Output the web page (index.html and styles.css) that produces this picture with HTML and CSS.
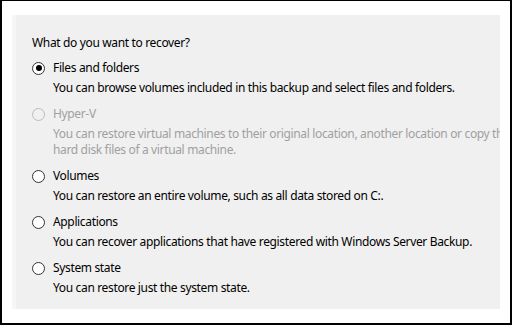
FILE: index.html
```html
<!DOCTYPE html>
<html lang="en">
<head>
  <meta charset="UTF-8" />
  <title>Select Recovery Type</title>
  <link rel="stylesheet" href="styles.css">
</head>
<body>
  <div class="frame">
    <div class="panel">
      <span class="focus-bar"></span>
      <div class="content">
        <p class="question">What do you want to recover?</p>

        <div class="option">
          <div class="option-title"><span class="radio checked"></span>Files and folders</div>
          <div class="option-desc">You can browse volumes included in this backup and select files and folders.</div>
        </div>

        <div class="option disabled">
          <div class="option-title"><span class="radio"></span>Hyper-V</div>
          <div class="option-desc">You can restore virtual machines to their original location, another location or copy the<br>hard disk files of a virtual machine.</div>
        </div>

        <div class="option">
          <div class="option-title"><span class="radio"></span>Volumes</div>
          <div class="option-desc">You can restore an entire volume, such as all data stored on C:.</div>
        </div>

        <div class="option">
          <div class="option-title"><span class="radio"></span>Applications</div>
          <div class="option-desc">You can recover applications that have registered with Windows Server Backup.</div>
        </div>

        <div class="option">
          <div class="option-title"><span class="radio"></span>System state</div>
          <div class="option-desc">You can restore just the system state.</div>
        </div>
      </div>
    </div>
  </div>
</body>
</html>
```

FILE: styles.css
```css
body {
  margin: 0;
  font-family: "Noto Sans", "Open Sans", sans-serif;
  font-size: 12px;
  letter-spacing: -0.35px;
  background: #fff;
}

.frame {
  width: 512px;
  height: 325px;
  box-sizing: border-box;
  border-top: 1px solid #000;
  border-left: 2px solid #000;
  border-right: 2px solid #000;
  border-bottom: 2px solid #000;
  background: #fff;
  padding: 14px 10px 0 10px;
}

.panel {
  position: relative;
  width: 488px;
  height: 294px;
  background: #f0f0f0;
  border-left: 4px solid #f6f6f6;
  box-sizing: border-box;
  overflow: hidden;
}

.focus-bar {
  position: absolute;
  left: -4px;
  top: 62px;
  width: 3px;
  height: 21px;
  background: #3d9af0;
}

.content {
  padding: 20px 0 0 16px;
  white-space: nowrap;
  line-height: 16px;
  color: #000;
}

.question {
  margin: 0 0 9px 0;
}

.option {
  margin-bottom: 10px;
}

.option-title {
  display: flex;
  align-items: center;
}

.option-desc {
  margin-top: 4px;
  padding-left: 21px;
}

.radio {
  width: 13px;
  height: 13px;
  box-sizing: border-box;
  border: 1px solid #333;
  border-radius: 50%;
  background: #fff;
  margin-right: 8px;
  display: flex;
  align-items: center;
  justify-content: center;
}

.radio.checked::after {
  content: "";
  width: 6px;
  height: 6px;
  border-radius: 50%;
  background: #000;
}

.disabled {
  color: #a0a0a0;
}

.disabled .radio {
  border-color: #bcbcbc;
  background: #f0f0f0;
}
```
